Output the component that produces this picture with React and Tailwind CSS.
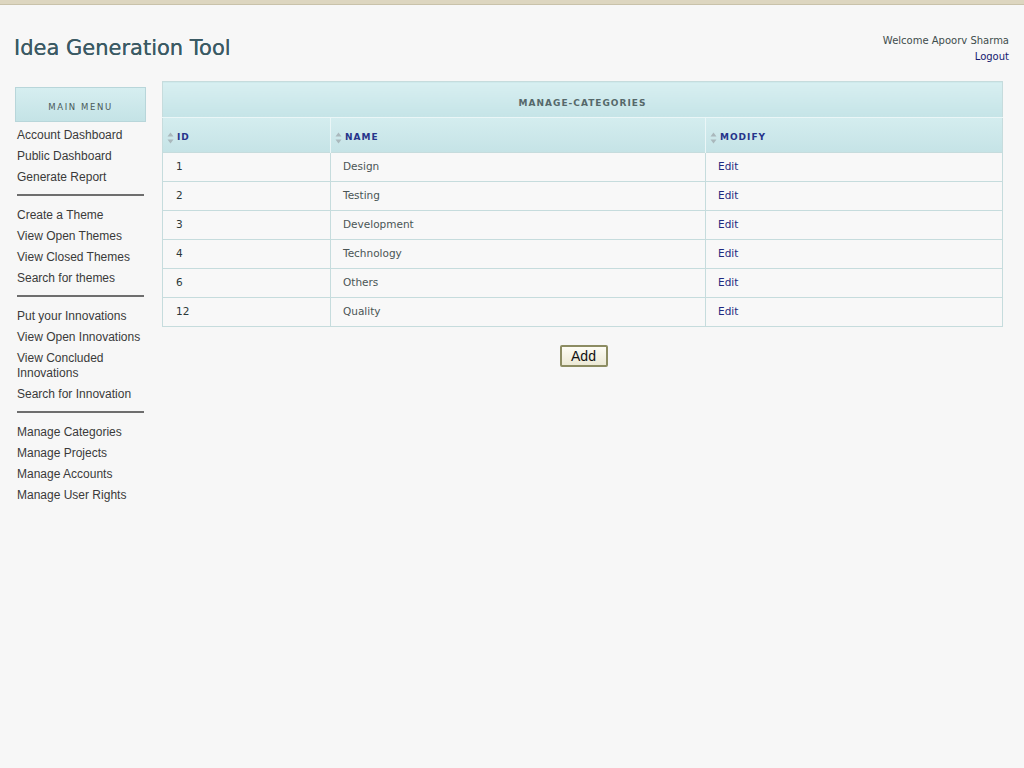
import React from 'react';

const menuGroups = [
  ['Account Dashboard', 'Public Dashboard', 'Generate Report'],
  ['Create a Theme', 'View Open Themes', 'View Closed Themes', 'Search for themes'],
  ['Put your Innovations', 'View Open Innovations', 'View Concluded Innovations', 'Search for Innovation'],
  ['Manage Categories', 'Manage Projects', 'Manage Accounts', 'Manage User Rights'],
];

const categories = [
  { id: 1, name: 'Design' },
  { id: 2, name: 'Testing' },
  { id: 3, name: 'Development' },
  { id: 4, name: 'Technology' },
  { id: 6, name: 'Others' },
  { id: 12, name: 'Quality' },
];

const SortIcon = () => (
  <svg width="7" height="12" viewBox="0 0 7 12" className="shrink-0">
    <path d="M3.5 0.5 L6.5 4.5 L0.5 4.5 Z" fill="#aab8bc" />
    <path d="M3.5 11.5 L6.5 7.5 L0.5 7.5 Z" fill="#aab8bc" />
  </svg>
);

const HeaderCell = ({ label, className = '' }) => (
  <th className={`h-[35px] px-[4px] pt-[6px] text-left align-middle border-r border-t border-[#eaf6f7] last:border-r-0 ${className}`}>
    <div className="flex items-center gap-[3px]">
      <SortIcon />
      <span className="text-[9px] font-bold tracking-[1px] text-[#26348a]">{label}</span>
    </div>
  </th>
);

export default function App() {
  return (
    <div className="min-h-[768px] bg-[#f7f7f7] font-['DejaVu_Sans',sans-serif]">
      <div className="h-[5px] bg-[#ddd6c0] border-b border-[#c9c2aa]" />

      <div className="flex justify-between items-start pl-[14px] pr-[15px] pt-[28px]">
        <h1 className="text-[21px] leading-[30px] text-[#3b5a64] [text-shadow:0_0_0.4px_#3b5a64]">Idea Generation Tool</h1>
        <div className="text-right text-[10px] leading-[16px] text-[#3e4c4c]">
          <div>Welcome Apoorv Sharma</div>
          <div className="text-[#151a70]">Logout</div>
        </div>
      </div>

      <div className="flex items-start pl-[15px] pt-[16px] pr-[21px] gap-[16px]">
        <aside className="w-[131px] shrink-0 mt-[6px] font-['Liberation_Sans',Arial,sans-serif]">
          <div className="h-[35px] pt-[5px] flex items-center justify-center bg-gradient-to-b from-[#d6eef0] to-[#c4e3e6] border border-[#b8d6da] text-[8.5px] tracking-[1.6px] text-[#4a5a5a] font-['DejaVu_Sans',sans-serif]">
            MAIN MENU
          </div>
          {menuGroups.map((group, gi) => (
            <div key={gi}>
              <ul className={`pl-[2px] ${gi === 0 ? 'pt-[3px]' : 'pt-[9px]'} pb-[6px]`}>
                {group.map((item) => (
                  <li key={item} className="text-[12px] leading-[15px] text-[#3a3a3a] py-[3px] pr-[2px]">{item}</li>
                ))}
              </ul>
              {gi < menuGroups.length - 1 && <div className="mx-[2px] h-[2px] bg-[#6e6e6e]" />}
            </div>
          ))}
        </aside>

        <main className="flex-1">
          <table className="w-full border-collapse border border-[#c6dcdd] text-[10.5px]">
            <thead>
              <tr>
                <th colSpan={3} className="h-[36px] pt-[8px] bg-gradient-to-b from-[#d8eff1] to-[#c5e4e7] text-center text-[9px] font-bold tracking-[1px] text-[#56686a]">
                  MANAGE-CATEGORIES
                </th>
              </tr>
              <tr className="bg-gradient-to-b from-[#d4edef] to-[#c5e3e6]">
                <HeaderCell label="ID" className="w-[168px]" />
                <HeaderCell label="NAME" className="w-[375px]" />
                <HeaderCell label="MODIFY" />
              </tr>
            </thead>
            <tbody>
              {categories.map((c) => (
                <tr key={c.id} className="h-[29px] bg-[#f8f8f8]">
                  <td className="border border-[#c6dcdd] pl-[13px] text-[#2c3838]">{c.id}</td>
                  <td className="border border-[#c6dcdd] pl-[12px] text-[#4a5555]">{c.name}</td>
                  <td className="border border-[#c6dcdd] pl-[12px] text-[#1f2a80]">Edit</td>
                </tr>
              ))}
            </tbody>
          </table>
          <div className="flex justify-center pt-[18px] pl-[2px]">
            <button className="h-[22px] w-[48px] rounded-[2px] border-2 border-[#8c8c62] bg-gradient-to-b from-[#fdfcf4] to-[#ece9d6] text-[14px] leading-none text-[#111] font-['Liberation_Sans',Arial,sans-serif]">
              Add
            </button>
          </div>
        </main>
      </div>
    </div>
  );
}
